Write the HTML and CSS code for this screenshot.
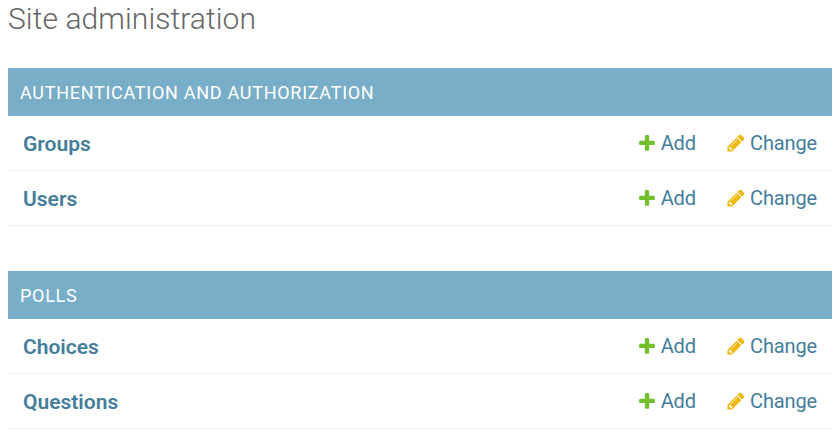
FILE: index.html
```html
<!DOCTYPE html>
<html lang="en">
<head>
<meta charset="utf-8">
<title>Site administration</title>
<link rel="stylesheet" href="styles.css">
</head>
<body>
<svg class="defs" width="0" height="0" aria-hidden="true">
<symbol id="add" viewBox="0 0 1792 1792"><path fill="#70bf2b" d="M1600 796v192q0 40-28 68t-68 28h-416v416q0 40-28 68t-68 28h-192q-40 0-68-28t-28-68v-416h-416q-40 0-68-28t-28-68v-192q0-40 28-68t68-28h416v-416q0-40 28-68t68-28h192q40 0 68 28t28 68v416h416q40 0 68 28t28 68z"/></symbol>
<symbol id="change" viewBox="0 0 1792 1792"><path fill="#efb80b" d="M491 1536l91-91-235-235-91 91v107h128v128h107zm523-928q0-22-22-22-10 0-17 7l-542 542q-7 7-7 17 0 22 22 22 10 0 17-7l542-542q7-7 7-17zm-54-192l416 416-832 832h-416v-416zm683 96q0 53-37 90l-166 166-416-416 166-165q36-38 90-38 53 0 91 38l235 234q37 39 37 91z"/></symbol>
</svg>
<h1>Site administration</h1>
<section class="module">
<h2>Authentication and Authorization</h2>
<div class="row"><a class="model">Groups</a><a class="add"><svg class="icon"><use href="#add"/></svg>Add</a><a class="change"><svg class="icon"><use href="#change"/></svg>Change</a></div>
<div class="row"><a class="model">Users</a><a class="add"><svg class="icon"><use href="#add"/></svg>Add</a><a class="change"><svg class="icon"><use href="#change"/></svg>Change</a></div>
</section>
<section class="module">
<h2>Polls</h2>
<div class="row"><a class="model">Choices</a><a class="add"><svg class="icon"><use href="#add"/></svg>Add</a><a class="change"><svg class="icon"><use href="#change"/></svg>Change</a></div>
<div class="row"><a class="model">Questions</a><a class="add"><svg class="icon"><use href="#add"/></svg>Add</a><a class="change"><svg class="icon"><use href="#change"/></svg>Change</a></div>
</section>
</body>
</html>
```
FILE: styles.css
```css
* { box-sizing: border-box; }
body { margin: 0; padding: 0 8px; background: #fff; color: #666; font-family: Roboto, "Liberation Sans", sans-serif; }
.defs { position: absolute; }
h1 { margin: 0 0 31px; height: 37px; line-height: 37px; font-size: 30px; font-weight: 300; letter-spacing: 0.08px; }
.module + .module { margin-top: 45px; }
h2 { margin: 0; padding: 0 12px; height: 48px; line-height: 49px; font-size: 18px; font-weight: 400; letter-spacing: 0.72px; text-transform: uppercase; color: #fff; background: #79aec8; }
.row { display: flex; height: 55px; padding: 0 15px; line-height: 54px; font-size: 20px; color: #447e9b; border-bottom: 1px solid #eee; }
.model { flex: 1; font-size: 21px; font-weight: 600; line-height: 56px; }
.add, .change { display: flex; align-items: center; letter-spacing: -0.15px; }
.add { width: 89.4px; }
.icon { width: 20px; height: 20px; margin-right: 4px; }
```
